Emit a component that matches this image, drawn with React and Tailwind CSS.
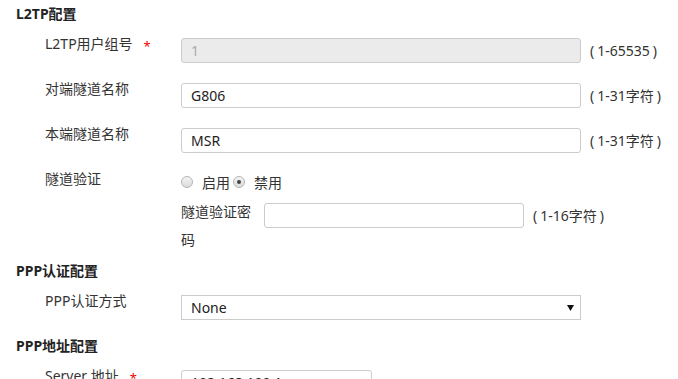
export default function App() {
  const font = { fontFamily: '"Noto Sans", "Noto Sans CJK SC", sans-serif' };

  const Hint = ({ children }) => (
    <span className="ml-[9px] text-[14px] text-[#333] whitespace-nowrap">
      (<span className="px-[3px]">{children}</span>)
    </span>
  );

  const Row = ({ label, required, children, last }) => (
    <div className={`flex items-start ${last ? '' : 'mb-4'}`}>
      <div className="w-[165px] pl-[29px] shrink-0 text-[14px] leading-5 text-[#333] flex">
        <span>{label}</span>
        {required && <span className="ml-[11px] mt-[2px] text-[#e00] text-[13px]">*</span>}
      </div>
      <div className="mt-1 flex items-center">{children}</div>
    </div>
  );

  const TextInput = ({ value, disabled, width = 'w-[400px]' }) => (
    <input
      readOnly
      value={value}
      className={`${width} h-[25px] border border-[#ccc] rounded-[3px] px-[9px] text-[14px] outline-none ${
        disabled ? 'bg-[#ebebeb] text-[#aaa]' : 'bg-white text-[#222]'
      }`}
      style={font}
    />
  );

  const Radio = ({ checked }) => (
    <span className="w-[12px] h-[12px] rounded-full border border-[#b5b5b5] bg-gradient-to-b from-[#f4f4f4] to-[#dcdcdc] flex items-center justify-center">
      {checked && <span className="w-[4px] h-[4px] rounded-full bg-[#444]" />}
    </span>
  );

  return (
    <div className="w-[678px] h-[379px] overflow-hidden bg-white px-4 pt-[4px]" style={font}>
      <div className="text-[14px] font-bold leading-5 text-[#222] mb-[10px]">L2TP配置</div>

      <Row label="L2TP用户组号" required>
        <TextInput value="1" disabled />
        <Hint>1-65535</Hint>
      </Row>
      <Row label="对端隧道名称">
        <TextInput value="G806" />
        <Hint>1-31字符</Hint>
      </Row>
      <Row label="本端隧道名称">
        <TextInput value="MSR" />
        <Hint>1-31字符</Hint>
      </Row>

      <div className="flex items-start h-[29px]">
        <div className="w-[165px] pl-[29px] shrink-0 text-[14px] leading-5 text-[#333]">隧道验证</div>
        <div className="flex items-center h-[26px] text-[14px] text-[#333]">
          <Radio />
          <span className="ml-[9px]">启用</span>
          <span className="ml-[3px]"><Radio checked /></span>
          <span className="ml-[9px]">禁用</span>
        </div>
      </div>

      <div className="flex items-start pl-[165px]">
        <div className="w-[76px] text-[14px] leading-[28px] text-[#333]">隧道验证密码</div>
        <div className="ml-[7px] mt-[5px] flex items-center">
          <TextInput value="" width="w-[260px]" />
          <Hint>1-16字符</Hint>
        </div>
      </div>

      <div className="mt-[7px] text-[14px] font-bold leading-5 text-[#222] mb-[10px]">PPP认证配置</div>
      <Row label="PPP认证方式">
        <div className="w-[400px] h-[25px] border border-[#ccc] bg-white flex items-center justify-between pl-[9px] pr-[6px] text-[14px] text-[#222]">
          <span>None</span>
          <svg width="7" height="6" viewBox="0 0 7 6">
            <path d="M0 0 H7 L3.5 6 Z" fill="#111" />
          </svg>
        </div>
      </Row>

      <div className="text-[14px] font-bold leading-5 text-[#222] mb-[10px]">PPP地址配置</div>
      <Row label="Server 地址" required last>
        <TextInput value="192.168.100.1" width="w-[191px]" />
      </Row>
    </div>
  );
}
